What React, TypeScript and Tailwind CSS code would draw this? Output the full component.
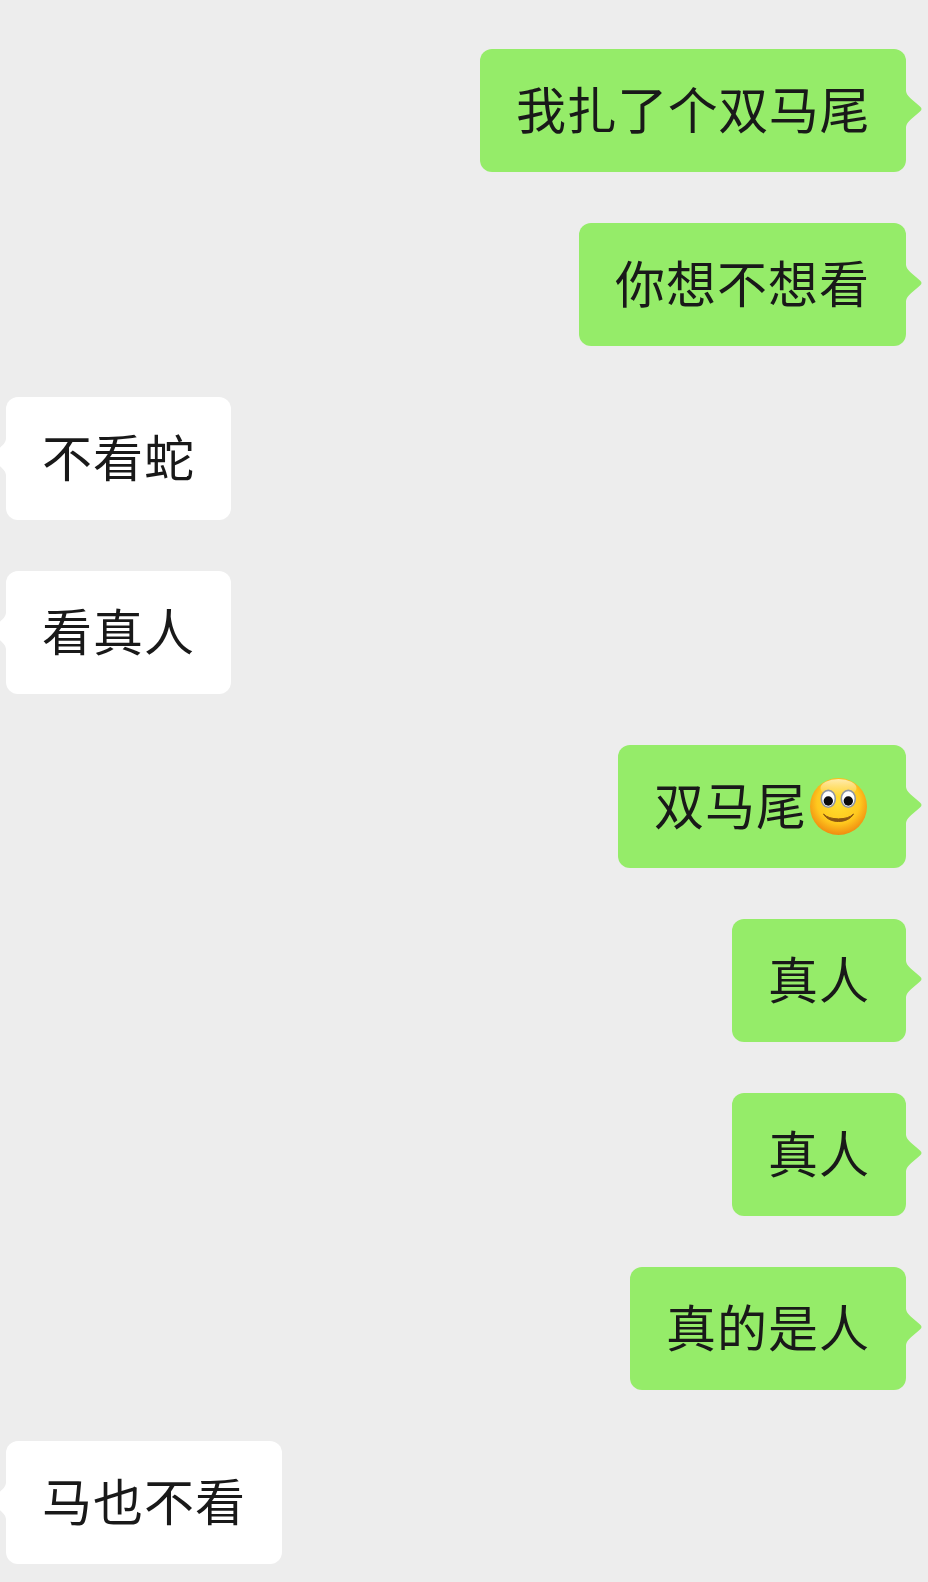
const messages: { text: string; mine: boolean; emoji?: boolean; tight?: boolean }[] = [
  { text: "我扎了个双马尾", mine: true, tight: true },
  { text: "你想不想看", mine: true },
  { text: "不看蛇", mine: false },
  { text: "看真人", mine: false },
  { text: "双马尾", mine: true, emoji: true },
  { text: "真人", mine: true },
  { text: "真人", mine: true },
  { text: "真的是人", mine: true },
  { text: "马也不看", mine: false },
];

const Smiley = () => (
  <svg viewBox="0 0 57 57" className="ml-[3px] h-[57px] w-[57px] shrink-0">
    <defs>
      <radialGradient id="face" cx="50%" cy="42%" r="58%">
        <stop offset="0%" stopColor="#ffe030" />
        <stop offset="65%" stopColor="#ffc81e" />
        <stop offset="100%" stopColor="#f08c10" />
      </radialGradient>
      <linearGradient id="shine" x1="0" y1="0" x2="0" y2="1">
        <stop offset="0%" stopColor="#fff3c8" stopOpacity="0.85" />
        <stop offset="100%" stopColor="#fff3c8" stopOpacity="0" />
      </linearGradient>
    </defs>
    <circle cx="28.5" cy="28.5" r="28.5" fill="url(#face)" />
    <ellipse cx="28.5" cy="10" rx="18" ry="9" fill="url(#shine)" />
    <ellipse cx="18.3" cy="20.8" rx="7" ry="8.4" fill="#fff" stroke="#8f96a3" strokeWidth="1.6" />
    <ellipse cx="38.3" cy="20.8" rx="7" ry="8.4" fill="#fff" stroke="#8f96a3" strokeWidth="1.6" />
    <circle cx="18.3" cy="23" r="4.7" fill="#0c0c0c" />
    <circle cx="38.3" cy="23" r="4.7" fill="#0c0c0c" />
    <path d="M13.5 36 C19 46 38 46 43.5 36 C38 42.5 19 42.5 13.5 36 Z" fill="#8a5512" stroke="#8a5512" strokeWidth="1" strokeLinejoin="round" />
  </svg>
);

const Bubble = ({ text, mine, emoji, tight }: { text: string; mine: boolean; emoji?: boolean; tight?: boolean }) => (
  <div className={mine ? "flex justify-end pr-[22px]" : "flex justify-start pl-[6px]"}>
    <div
      className={`relative flex h-[123px] items-center rounded-[12px] pl-[36px] text-[50px] leading-none text-[#191919] ${
        mine ? "bg-[#95ec69]" : "bg-white"
      } ${emoji ? "pr-[39px]" : "pr-[36px]"}`}
    >
      <span className={tight ? "mb-[7px] tracking-[0.57px]" : "mb-[7px] tracking-[1px]"}>{text}</span>
      {emoji && <Smiley />}
      {mine ? (
        <svg viewBox="0 0 16 36" className="absolute left-full top-[42px] h-[36px] w-[16px]">
          <path d="M0 0 C1 5 3 6 14 15.5 C16 17.5 16 18.5 14 20.5 C3 30 1 31 0 36 Z" fill="#95ec69" />
        </svg>
      ) : (
        <svg viewBox="0 0 16 36" className="absolute right-full top-[42px] h-[36px] w-[16px]">
          <path d="M16 0 C15 5 13 6 2 15.5 C0 17.5 0 18.5 2 20.5 C13 30 15 31 16 36 Z" fill="#ffffff" />
        </svg>
      )}
    </div>
  </div>
);

export default function App() {
  return (
    <div
      className="flex min-h-[1582px] flex-col gap-[51px] overflow-hidden bg-[#ededed] pb-[18px] pt-[49px]"
      style={{ fontFamily: '"Noto Sans CJK SC", "Noto Sans", sans-serif' }}
    >
      {messages.map((m, i) => (
        <Bubble key={i} {...m} />
      ))}
    </div>
  );
}
